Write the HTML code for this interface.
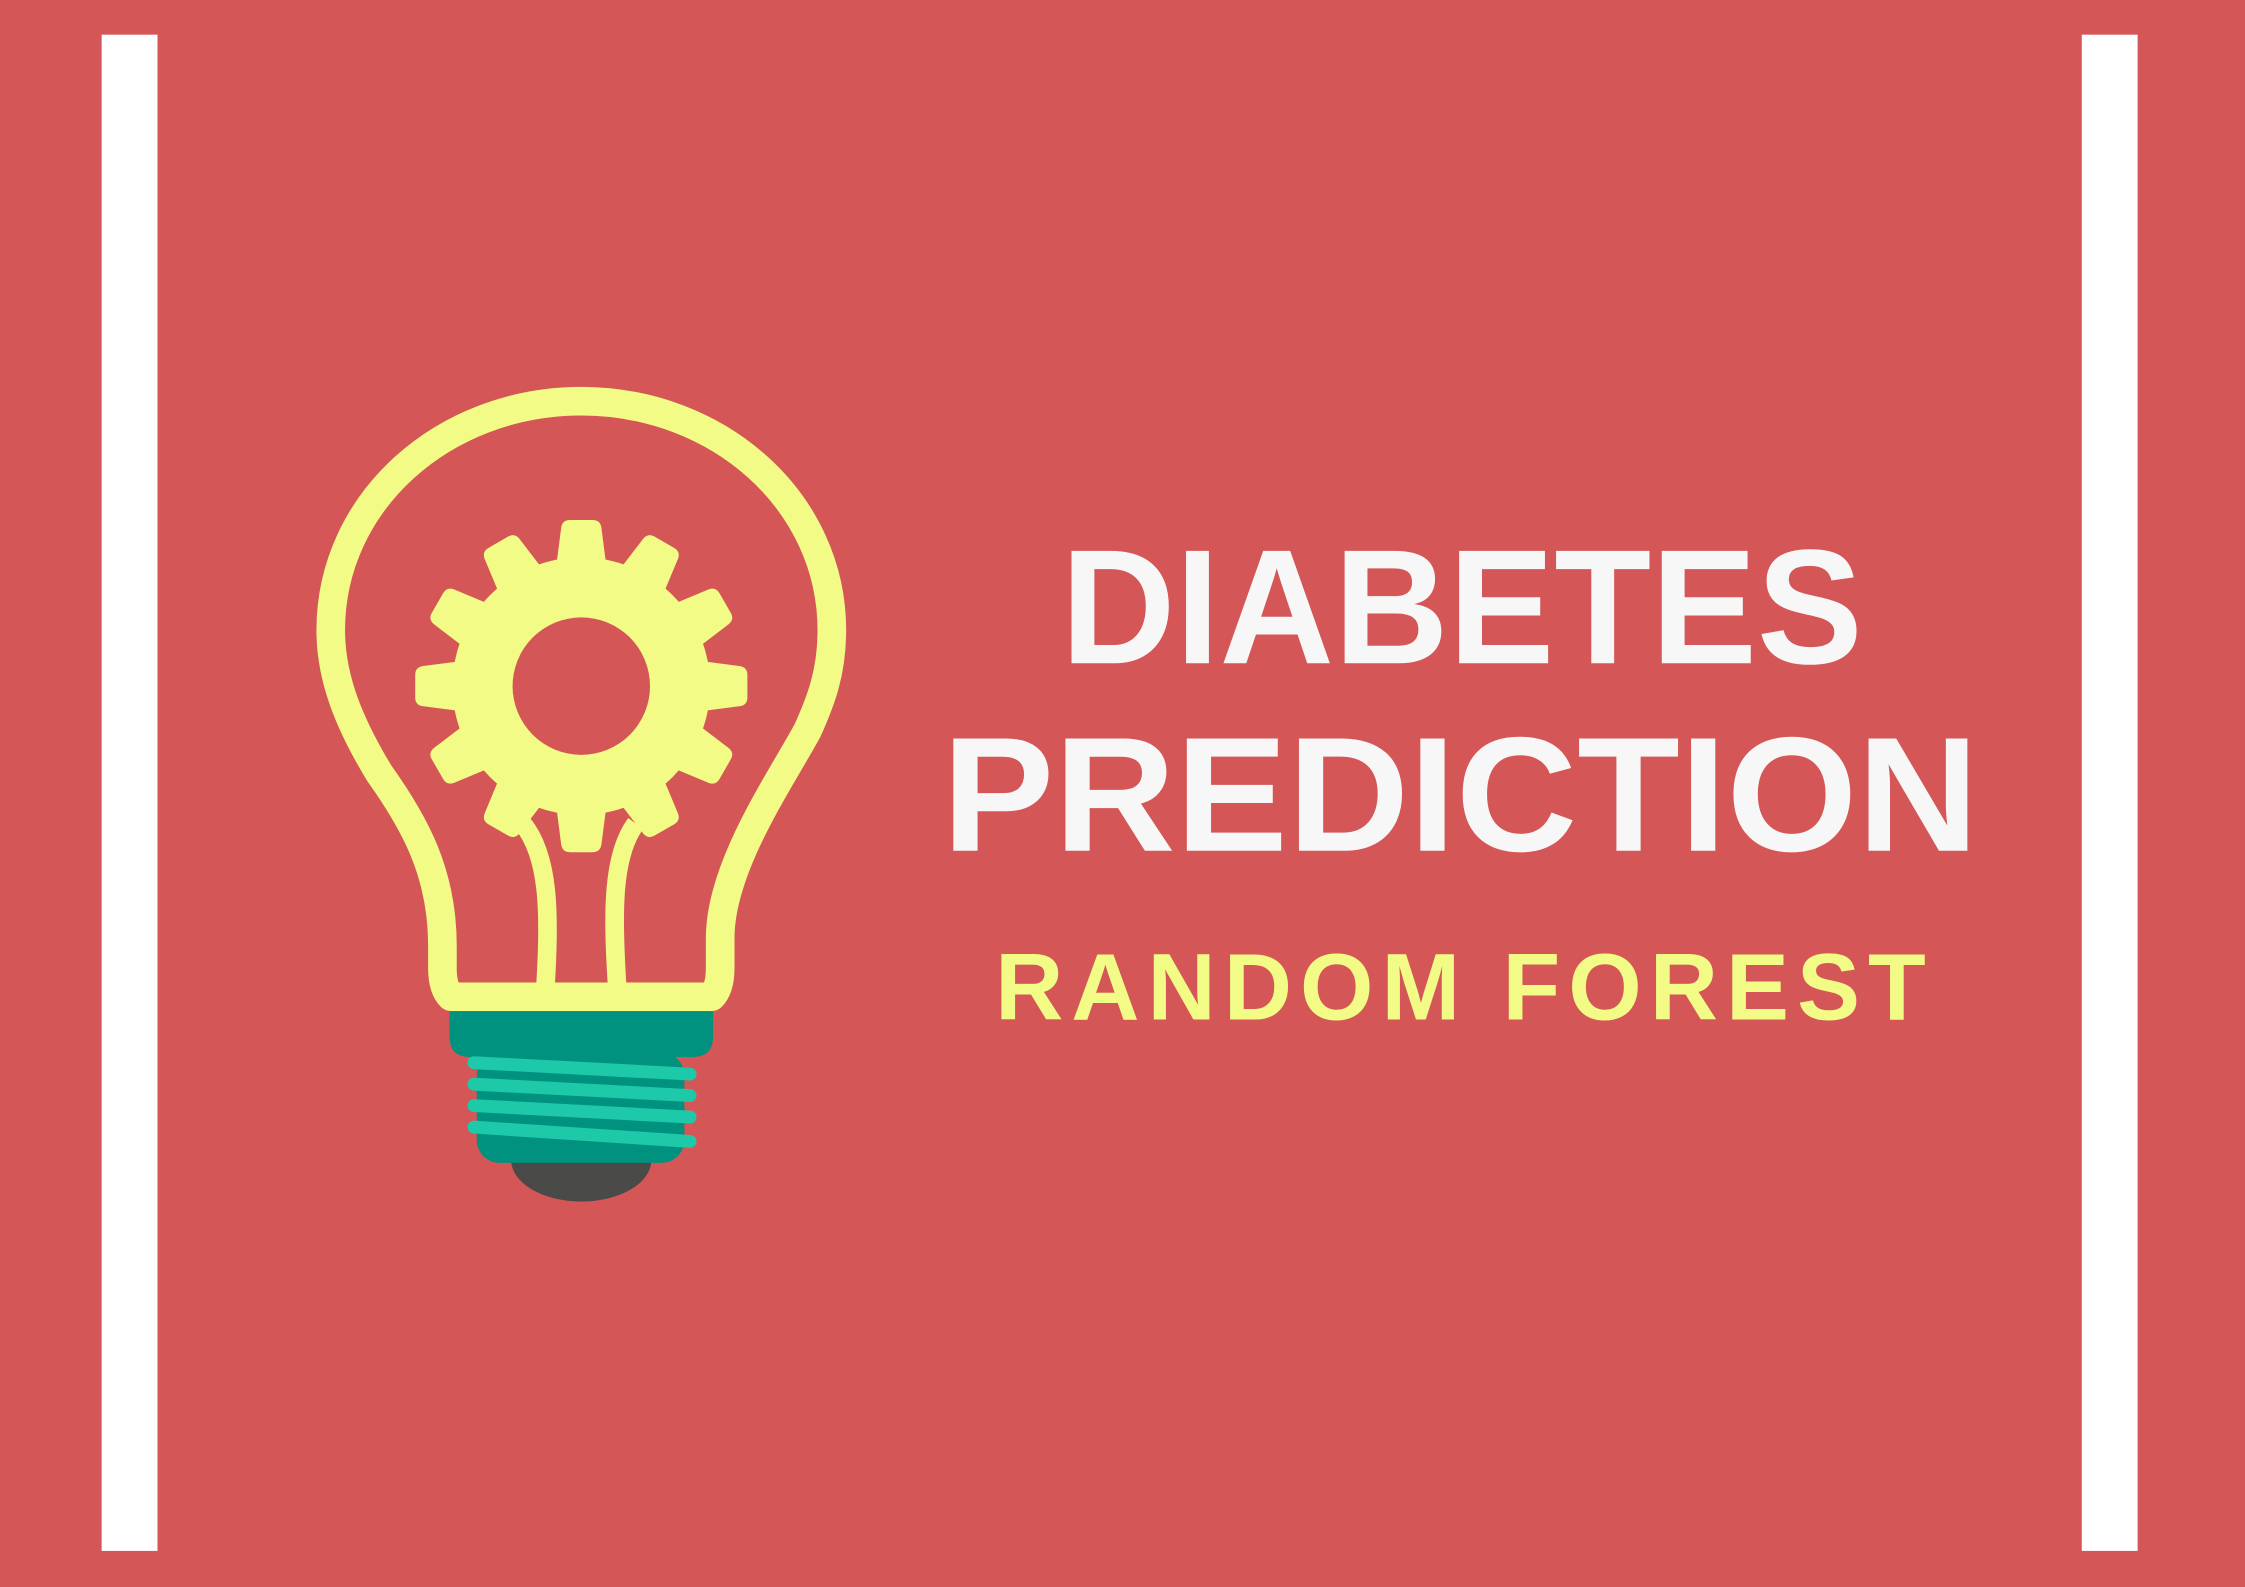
<!DOCTYPE html>
<html><head><meta charset="utf-8"><style>
html,body{margin:0;padding:0;background:#D55656;}
svg{display:block}
</style></head><body>
<svg width="2245" height="1587" viewBox="0 0 1568 1108" xmlns="http://www.w3.org/2000/svg">
<rect width="1568" height="1108" fill="#D55656"/>
<rect x="71" y="24" width="39" height="1059" fill="#fff"/>
<rect x="1454" y="24" width="39" height="1059" fill="#fff"/>
<path d="M315,696 Q309,690 309,676 L309,660 C309,610 290,575 265,540 C245,507 231,475 231,440 C231,350 310,280 406,280 C502,280 581,350 581,440 C581,470 573,490 564,510 C545,545 503,605 503,655 L503,676 Q503,690 497,696 Z" fill="none" stroke="#F2FB86" stroke-width="20" stroke-linejoin="round"/>
<rect x="315" y="686" width="182" height="20" fill="#F2FB86"/>
<path d="M365,575 C384,598 384,640 381,688" fill="none" stroke="#F2FB86" stroke-width="13"/>
<path d="M444,575 C427,598 428,640 431,688" fill="none" stroke="#F2FB86" stroke-width="13"/>
<g transform="translate(406,479)" fill="#F2FB86">
<circle r="90"/>
<g id="t"><path d="M-18,-80 L-14,-111 Q-13,-116 -8,-116 L8,-116 Q13,-116 14,-111 L18,-80 Z"/></g>
<use href="#t" transform="rotate(30)"/><use href="#t" transform="rotate(60)"/><use href="#t" transform="rotate(90)"/>
<use href="#t" transform="rotate(120)"/><use href="#t" transform="rotate(150)"/><use href="#t" transform="rotate(180)"/>
<use href="#t" transform="rotate(210)"/><use href="#t" transform="rotate(240)"/><use href="#t" transform="rotate(270)"/>
<use href="#t" transform="rotate(300)"/><use href="#t" transform="rotate(330)"/>
<circle r="48" fill="#D55656"/>
</g>
<path d="M357,810 A49,29 0 0 0 455,810 Z" fill="#4A4A48"/>
<rect x="333" y="735" width="145" height="77" rx="16" fill="#00917F"/>
<path d="M314,706 H498 V724 Q498,738 484,738 H328 Q314,738 314,724 Z" fill="#00917F"/>
<g stroke="#1DC9A9" stroke-width="9" stroke-linecap="round">
<line x1="331" y1="742" x2="482" y2="750"/>
<line x1="331" y1="757" x2="482" y2="765"/>
<line x1="331" y1="772" x2="482" y2="780"/>
<line x1="331" y1="787" x2="482" y2="797"/>
</g>
<g font-family="'Liberation Sans',sans-serif" font-weight="bold" fill="#F7F7F7">
<text x="741" y="463" font-size="114" textLength="560" lengthAdjust="spacingAndGlyphs">DIABETES</text>
<text x="658" y="594" font-size="114" textLength="724" lengthAdjust="spacingAndGlyphs">PREDICTION</text>
<text x="695" y="712" font-size="66" fill="#F2FB86" textLength="650" lengthAdjust="spacing">RANDOM FOREST</text>
</g>
</svg>
</body></html>
